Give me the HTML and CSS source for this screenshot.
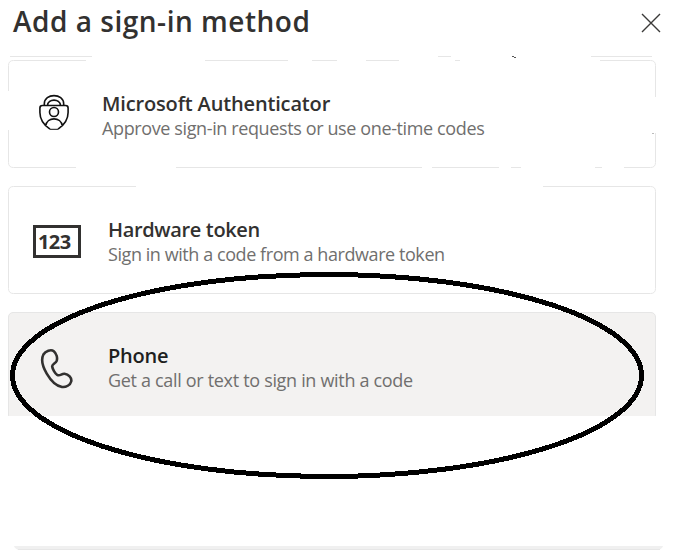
FILE: index.html
```html
<!DOCTYPE html>
<html lang="en">
<head>
<meta charset="utf-8">
<title>Add a sign-in method</title>
<link rel="stylesheet" href="styles.css">
</head>
<body>
<main class="dialog">
  <header class="header">
    <h1 class="title">Add a sign-in method</h1>
    <button class="close" aria-label="Close"><svg width="20" height="20" viewBox="0 0 20 20"><path d="M1 1L19 19M19 1L1 19" fill="none" stroke="#3b3a39" stroke-width="1.4"/></svg></button>
  </header>
  <svg class="divider" width="677" height="5" viewBox="0 0 677 5"><path d="M10 1.5H92M438 1.5H451M591 1.5H652" stroke="#e6e6e6"/><path d="M512 1.5H514M514 2.5H516" stroke="#555"/></svg>
  <div class="methods">
    <section class="card">
      <svg class="frame" width="648" height="108" viewBox="0 0 648 108"><path d="M.5 31V5.5Q.5.500 5.500.500H78M197 .5H280M304 .5H329M358 .5H391M447 .5H452M592 .5H642.500Q647.500.5 647.500 5.500V37M647.500 73V102.500Q647.500 107.500 642.500 107.500H616M587 107.500H594M503 107.500H513M424 107.500H491M168 107.500H414M68 107.500H5.500Q.5 107.500.5 102.500V70"/><path class="speck" d="M644 73.500H646"/></svg>
      <div class="icon icon-auth"><svg width="32" height="38" viewBox="0 0 32 38"><g fill="none" stroke="#111" stroke-width="1.600"><path d="M6.300 11.500V10C6.300-1.200 25.700-1.200 25.700 10V11.500M9.500 11.500C10 4.300 22 4.300 22.500 11.500M12 35.200C5 30.500 1.900 25 1.900 18.500V14Q1.900 11.500 4.400 11.500H27.600Q30.100 11.500 30.100 14V18.500C30.100 25 27 30.500 20 35.200M7.600 32C9 22.500 23 22.500 24.400 32"/><circle cx="16" cy="18" r="4.500"/><path d="M12 35.300H20" stroke-width="1"/></g></svg></div>
      <div class="copy"><h2 class="name w-auth">Microsoft Authenticator</h2><p class="desc d-auth">Approve sign-in requests or use one-time codes</p></div>
    </section>
    <section class="card">
      <svg class="frame" width="648" height="108" viewBox="0 0 648 108"><path d="M128 .5H5.500Q.5.500.5 5.500V102.500Q.5 107.500 5.500 107.500H642.500Q647.500 107.500 647.500 102.500V5.500Q647.500.5 642.500.5H535"/></svg>
      <div class="icon icon-token"><span class="digits">123</span></div>
      <div class="copy"><h2 class="name w-token">Hardware token</h2><p class="desc d-token">Sign in with a code from a hardware token</p></div>
    </section>
    <section class="card card-active">
      <div class="icon icon-phone"><svg width="34" height="42" viewBox="0 0 34 42"><path d="M3.400 6.500C5.500 3 11 1 13.800 3.200C16.500 5.300 17.800 10 16.600 13C15.500 15.500 12 16 12.200 18.500C12.500 21 15 25.500 17.200 26.900C20 28.500 21.500 25.500 24.500 25.800C28.500 26.200 32 30 31.200 33.500C30.400 37 26 39.500 22 39C11 37-1.500 16 3.400 6.500Z" fill="none" stroke="#323130" stroke-width="2.600"/></svg></div>
      <div class="copy"><h2 class="name w-phone">Phone</h2><p class="desc d-phone">Get a call or text to sign in with a code</p></div>
    </section>
  </div>
  <svg class="edge" width="650" height="5" viewBox="0 0 650 5"><path d="M0 0H649Q648 3 644 4H5Q1 3 0 0Z" fill="#f0f0f0"/><path d="M4 3.500H646" stroke="#e7e7e7"/></svg>
  <svg class="highlight" width="636" height="210" viewBox="0 0 636 210" shape-rendering="crispEdges"><ellipse cx="318" cy="105.500" rx="314.500" ry="101" fill="none" stroke="#000" stroke-width="5"/></svg>
</main>
</body>
</html>
```
FILE: styles.css
```css
* { box-sizing: border-box; }
body { margin: 0; background: #fff; font-family: "Open Sans", "Noto Sans", sans-serif; }
.dialog { position: relative; width: 677px; height: 553px; overflow: hidden; }
.header { display: flex; justify-content: space-between; height: 55px; padding: 0 16.5px 0 13px; }
.title { margin: 0; font-size: 28px; line-height: 42px; font-weight: 600; letter-spacing: 0.52px; color: #323130; white-space: nowrap; }
.close { display: block; width: 20px; height: 20px; margin-top: 13px; padding: 0; border: 0; background: none; }
.close svg, .divider, .edge, .icon svg { display: block; }
.methods { display: flex; flex-direction: column; gap: 18px; height: 356px; padding: 0 21px 0 8px; overflow: hidden; }
.card { position: relative; display: flex; flex: none; width: 648px; height: 108px; }
.card-active { background: #f3f2f1; border: 1px solid #e6e6e6; border-radius: 5px; }
.card-active .icon, .card-active .copy { margin-top: -1px; margin-left: -1px; }
.card-active .copy { margin-left: 0; }
.frame { position: absolute; inset: 0; fill: none; stroke: #e6e6e6; }
.speck { stroke: #bbb; }
.icon { flex: none; width: 100px; }
.icon-auth { width: 94px; padding: 34px 0 0 30px; }
.icon-token { padding: 39px 0 0 25px; }
.digits { display: block; width: 48px; height: 33px; padding-left: 2px; border: 3px solid #323130; font-size: 20px; font-weight: 700; line-height: 27px; color: #323130; letter-spacing: -0.6px; }
.icon-phone { padding: 36px 0 0 32px; }
.copy { padding-top: 31px; white-space: nowrap; }
.name { margin: 0; font-size: 20px; line-height: 26px; font-weight: 600; color: #323130; }
.w-auth { letter-spacing: -0.15px; }
.w-token { letter-spacing: -0.35px; }
.w-phone { letter-spacing: -0.2px; }
.card-active .name { color: #201f1e; }
.desc { margin: -1px 0 0; font-size: 18px; line-height: 24px; color: #706f6e; }
.d-auth { letter-spacing: -0.38px; }
.d-token { letter-spacing: -0.43px; }
.d-phone { letter-spacing: -0.32px; }
.edge { margin: 130px 0 0 14px; }
.highlight { position: absolute; left: 9px; top: 270px; }
```
